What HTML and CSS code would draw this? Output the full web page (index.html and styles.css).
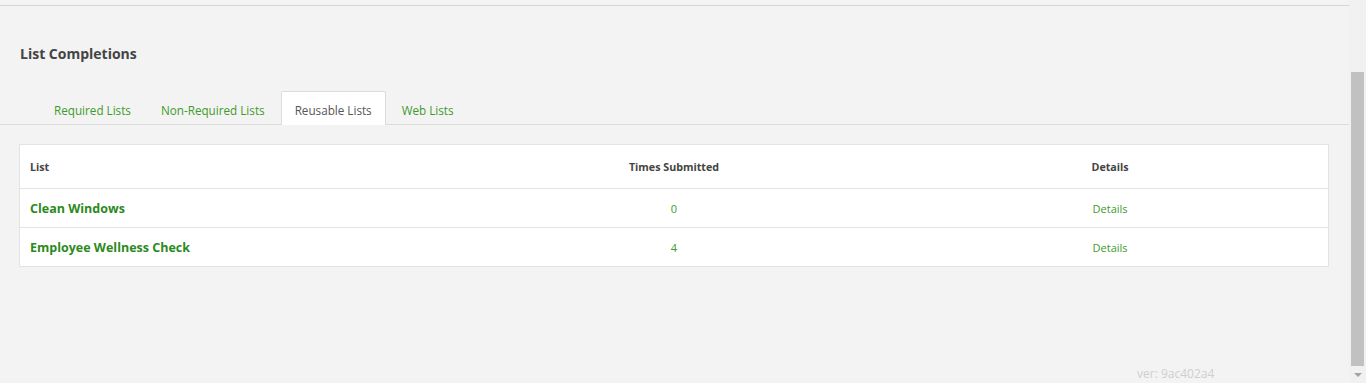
FILE: index.html
```html
<html>
<head>
  <meta charset="UTF-8">
  <meta name="viewport" content="width=device-width, initial-scale=1.0">
  <title>List Completions</title>
  <link rel="stylesheet" href="styles.css">
</head>
<body>
  <div class="page">
    <div class="top-bar"></div>

    <h2 class="page-title">List Completions</h2>

    <ul class="tabs">
      <li><a href="#">Required Lists</a></li>
      <li><a href="#">Non-Required Lists</a></li>
      <li class="active"><a href="#">Reusable Lists</a></li>
      <li><a href="#">Web Lists</a></li>
    </ul>

    <div class="tab-content">
      <table class="list-table">
        <thead>
          <tr>
            <th class="col-name">List</th>
            <th>Times Submitted</th>
            <th>Details</th>
          </tr>
        </thead>
        <tbody>
          <tr>
            <td class="col-name"><a href="#" class="list-name">Clean Windows</a></td>
            <td><a href="#">0</a></td>
            <td><a href="#">Details</a></td>
          </tr>
          <tr>
            <td class="col-name"><a href="#" class="list-name">Employee Wellness Check</a></td>
            <td><a href="#">4</a></td>
            <td><a href="#">Details</a></td>
          </tr>
        </tbody>
      </table>
    </div>

    <div class="version">ver: 9ac402a4</div>
  </div>

  <!-- fake window scrollbar, page is scrolled down a bit -->
  <div class="scrollbar">
    <div class="thumb"></div>
    <div class="arrow"></div>
  </div>
</body>
</html>
```

FILE: styles.css
```css
body {
  margin: 0;
  background-color: #f3f3f3;
  font-family: "Open Sans", Arial, sans-serif;
  color: #444;
  overflow: hidden;
}

a {
  text-decoration: none;
  color: #3f9a2c;
}

.page {
  margin-right: 17px;
  height: 383px;
  display: flex;
  flex-direction: column;
}

.top-bar {
  height: 5px;
  border-bottom: 1px solid #d6d6d6;
}

.page-title {
  margin: 0;
  padding: 38px 20px 0 20px;
  font-size: 14px;
  font-weight: bold;
  color: #444;
  line-height: 20px;
}

.tabs {
  list-style: none;
  margin: 27px 0 0 0;
  padding: 0 0 0 40px;
  display: flex;
  gap: 2px;
  border-bottom: 1px solid #dcdcdc;
}

.tabs li {
  margin-bottom: -1px;
}

.tabs li a {
  display: block;
  padding: 0 13px;
  height: 32px;
  line-height: 36px;
  font-size: 11.7px;
  border: 1px solid transparent;
  border-bottom: none;
  border-radius: 2px 2px 0 0;
}

.tabs li.active a {
  background-color: #fff;
  color: #555;
  border-color: #dcdcdc;
  height: 33px;
}

.tab-content {
  padding: 19px 20px 0 19px;
}

.list-table {
  width: 100%;
  border-collapse: collapse;
  background-color: #fff;
  border: 1px solid #e3e3e3;
  table-layout: fixed;
}

.list-table th,
.list-table td {
  text-align: center;
  padding: 0 10px;
  font-size: 11px;
}

.list-table th {
  height: 44px;
  font-size: 10.7px;
  font-weight: bold;
  color: #444;
}

.list-table td {
  height: 39px;
  border-top: 1px solid #e3e3e3;
}

.list-table .col-name {
  text-align: left;
}

.list-table a.list-name {
  font-size: 12.5px;
  font-weight: bold;
  color: #2a8a1c;
}

.version {
  margin-top: auto;
  padding: 0 0 1px 1137px;
  font-size: 12px;
  color: #cfcfcf;
  line-height: 16px;
}

.scrollbar {
  position: fixed;
  top: 0;
  right: 0;
  width: 17px;
  height: 100%;
  background-color: #f1f1f1;
}

.scrollbar .thumb {
  position: absolute;
  top: 72px;
  left: 2px;
  width: 13px;
  height: 294px;
  background-color: #c1c1c1;
}

.scrollbar .arrow {
  position: absolute;
  bottom: 6px;
  left: 5px;
  width: 0;
  height: 0;
  border-left: 4px solid transparent;
  border-right: 4px solid transparent;
  border-top: 4px solid #a3a3a3;
}
```
